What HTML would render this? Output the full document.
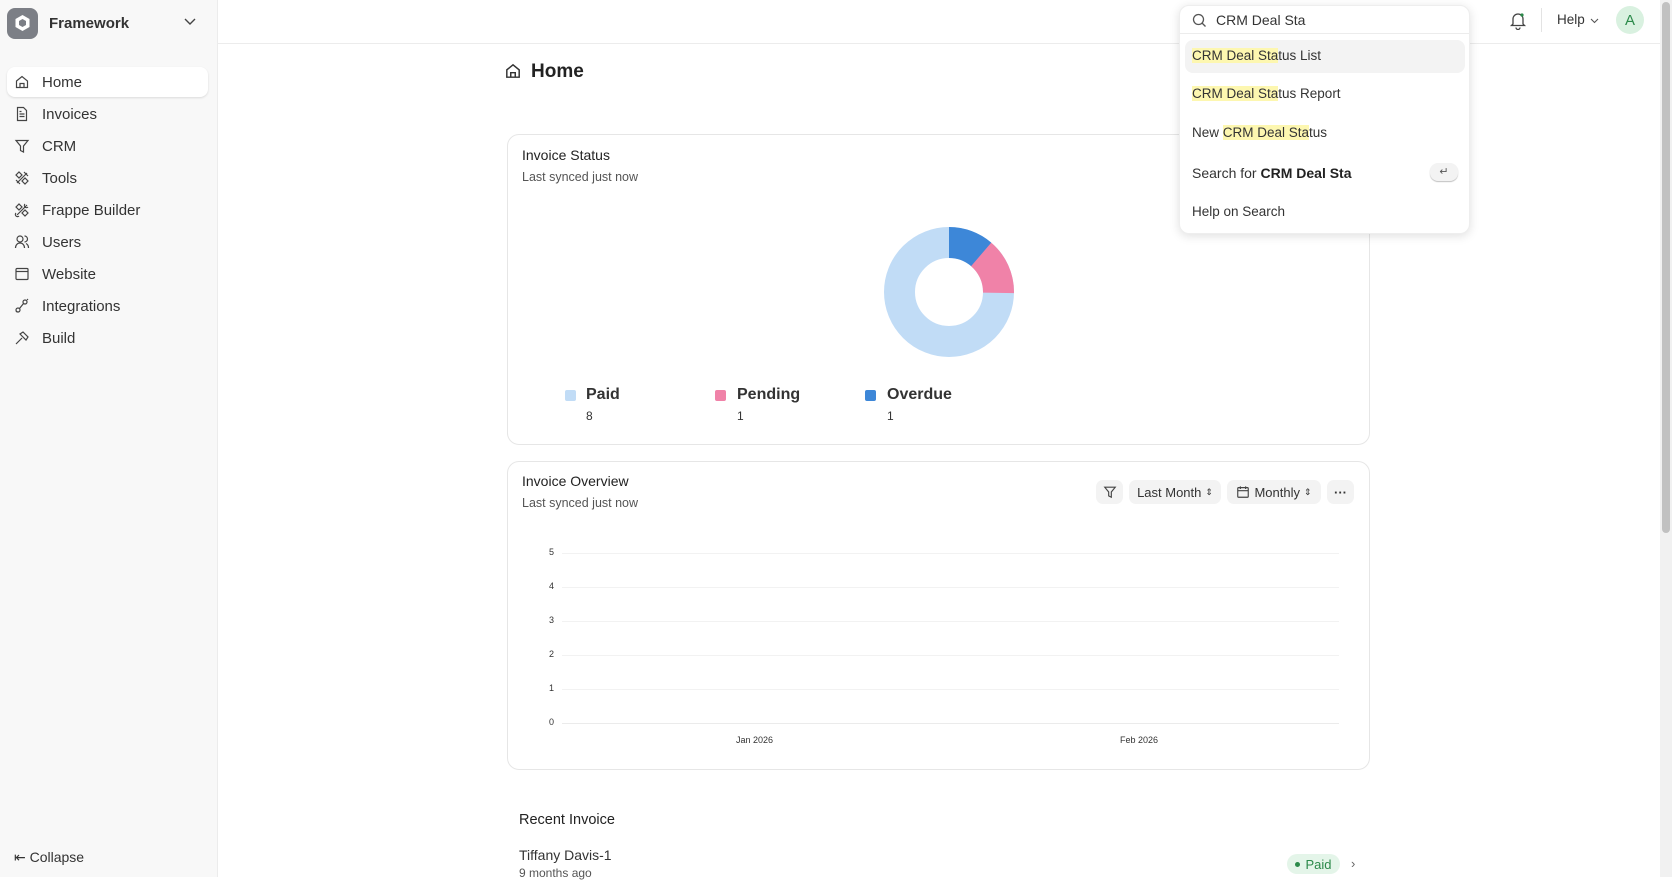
<!DOCTYPE html>
<html><head><meta charset="utf-8"><style>
*{box-sizing:border-box;margin:0;padding:0}
body{width:1672px;height:877px;overflow:hidden;background:#fff;font-family:"Liberation Sans",sans-serif;color:#1f1f1f;position:relative}
.abs{position:absolute}
.side{left:0;top:0;width:218px;height:877px;background:#f8f8f8;border-right:1px solid #ececec}
.nav{position:absolute;left:7px;width:201px;height:30px;font-size:15px;color:#333;display:flex;align-items:center;padding-left:35px}
.nav svg{position:absolute;left:7px;top:7px}
.nav.sel{background:#fff;border-radius:8px;box-shadow:0 1px 2px rgba(0,0,0,.12)}
.card{border:1px solid #e6e6e6;border-radius:12px;background:#fff}
.t{font-size:14px;color:#222}
.s{font-size:12.5px;color:#555}
.btn{background:#f3f3f3;border-radius:7px;height:24px;font-size:13px;color:#333;display:flex;align-items:center;justify-content:center;gap:4px}
.yl{font-size:9px;color:#333;left:549px}
.gl{left:562px;width:777px;height:1px;background:#f2f2f2}
.hl{background:#fdf7b0}
.it{left:1192px;font-size:13.5px;color:#333}
</style></head><body>
<div class="abs side"></div>
<div class="abs" style="left:7px;top:8px;width:31px;height:31px;border-radius:8px;background:#7c7f86">
<svg width="31" height="31" viewBox="0 0 31 31"><path d="M15.5 7l7 4v8l-7 4-7-4v-8z" fill="#fff"/><path d="M15.5 11l3.5 2v4l-3.5 2-3.5-2v-4z" fill="#7c7f86"/></svg></div>
<div class="abs" style="left:49px;top:15px;font-size:15px;font-weight:bold;color:#333">Framework</div>
<svg class="abs" style="left:184px;top:18px" width="12" height="8" viewBox="0 0 12 8"><path d="M1 1l5 5 5-5" fill="none" stroke="#444" stroke-width="1.4"/></svg>

<div class="nav sel" style="top:67px"><svg width="16" height="16" viewBox="0 0 16 16" fill="none" stroke="#444" stroke-width="1.2"><path d="M2.5 7L8 2.5 13.5 7v6.5h-11z M6 13.5V9.5h4v4"/></svg>Home</div>
<div class="nav" style="top:99px"><svg width="16" height="16" viewBox="0 0 16 16" fill="none" stroke="#444" stroke-width="1.2"><path d="M3.5 1.5h6l3 3v10h-9z M5.5 8h5 M5.5 10.5h5 M5.5 5.5h2"/></svg>Invoices</div>
<div class="nav" style="top:131px"><svg width="16" height="16" viewBox="0 0 16 16" fill="none" stroke="#444" stroke-width="1.2"><path d="M2 2.5h12l-4.5 5.5v6l-3-1.5v-4.5z"/></svg>CRM</div>
<div class="nav" style="top:163px"><svg width="16" height="16" viewBox="0 0 16 16" fill="none" stroke="#444" stroke-width="1.2"><path d="M3 13L13 3 M2 5l3-3 3 3-3 3z M8 11l3-3 3 3-3 3z M10 2l4 4 M2 10l4 4"/></svg>Tools</div>
<div class="nav" style="top:195px"><svg width="16" height="16" viewBox="0 0 16 16" fill="none" stroke="#444" stroke-width="1.2"><path d="M3 13L13 3 M2 5l3-3 3 3-3 3z M8 11l3-3 3 3-3 3z M11 2a2 2 0 103 3 M2 11a2 2 0 003 3"/></svg>Frappe Builder</div>
<div class="nav" style="top:227px"><svg width="16" height="16" viewBox="0 0 16 16" fill="none" stroke="#444" stroke-width="1.2"><circle cx="6" cy="5" r="3"/><path d="M1.5 14c0-3 2-5 4.5-5s4.5 2 4.5 5 M10.5 2a3 3 0 010 6 M12 9.5c1.5.7 2.5 2.3 2.5 4.5"/></svg>Users</div>
<div class="nav" style="top:259px"><svg width="16" height="16" viewBox="0 0 16 16" fill="none" stroke="#444" stroke-width="1.2"><rect x="2" y="2.5" width="12" height="11" rx="1"/><path d="M2 5.5h12"/></svg>Website</div>
<div class="nav" style="top:291px"><svg width="16" height="16" viewBox="0 0 16 16" fill="none" stroke="#444" stroke-width="1.2"><circle cx="4" cy="12" r="2"/><circle cx="11" cy="4" r="2"/><path d="M5.5 10.5L9.5 5.5 M2 14l1-1 M13 2l1-1"/></svg>Integrations</div>
<div class="nav" style="top:323px"><svg width="16" height="16" viewBox="0 0 16 16" fill="none" stroke="#444" stroke-width="1.2"><path d="M2 14l6-6 M6 4l3-2 5 5-2 3z"/></svg>Build</div>
<div class="abs" style="left:14px;top:849px;font-size:14px;color:#333">⇤ Collapse</div>

<div class="abs" style="left:218px;top:43px;width:1442px;height:1px;background:#ececec"></div>
<svg class="abs" style="left:504px;top:62px" width="18" height="18" viewBox="0 0 16 16" fill="none" stroke="#333" stroke-width="1.3"><path d="M2.5 7L8 2.5 13.5 7v6.5h-11z M6 13.5V9.5h4v4"/></svg>
<div class="abs" style="left:531px;top:61px;font-size:19px;font-weight:bold;color:#222">Home</div>

<div class="abs card" style="left:507px;top:134px;width:863px;height:311px"></div>
<div class="abs t" style="left:522px;top:147px">Invoice Status</div>
<div class="abs s" style="left:522px;top:170px">Last synced just now</div>
<svg class="abs" style="left:884px;top:227px" width="130" height="130" viewBox="-65 -65 130 130">
<circle r="49.5" fill="none" stroke="#c1dcf6" stroke-width="31"/>
<circle r="49.5" fill="none" stroke="#f082a8" stroke-width="31" stroke-dasharray="44 311" transform="rotate(-50)"/>
<circle r="49.5" fill="none" stroke="#3d87d8" stroke-width="31" stroke-dasharray="35 311" transform="rotate(-90)"/>
</svg>
<div class="abs" style="left:565px;top:390px;width:11px;height:11px;border-radius:2px;background:#c1dcf6"></div>
<div class="abs" style="left:586px;top:386px;font-size:16px;font-weight:bold;color:#333">Paid</div>
<div class="abs" style="left:586px;top:409px;font-size:12px;color:#333">8</div>
<div class="abs" style="left:715px;top:390px;width:11px;height:11px;border-radius:2px;background:#f082a8"></div>
<div class="abs" style="left:737px;top:386px;font-size:16px;font-weight:bold;color:#333">Pending</div>
<div class="abs" style="left:737px;top:409px;font-size:12px;color:#333">1</div>
<div class="abs" style="left:865px;top:390px;width:11px;height:11px;border-radius:2px;background:#3d87d8"></div>
<div class="abs" style="left:887px;top:386px;font-size:16px;font-weight:bold;color:#333">Overdue</div>
<div class="abs" style="left:887px;top:409px;font-size:12px;color:#333">1</div>

<div class="abs card" style="left:507px;top:461px;width:863px;height:309px"></div>
<div class="abs t" style="left:522px;top:473px">Invoice Overview</div>
<div class="abs s" style="left:522px;top:496px">Last synced just now</div>
<div class="abs btn" style="left:1096px;top:480px;width:27px"><svg width="14" height="14" viewBox="0 0 16 16" fill="none" stroke="#444" stroke-width="1.3"><path d="M2 2.5h12l-4.5 5.5v6l-3-1.5v-4.5z"/></svg></div>
<div class="abs btn" style="left:1129px;top:480px;width:92px">Last Month <span style="font-size:9px">⇕</span></div>
<div class="abs btn" style="left:1227px;top:480px;width:94px"><svg width="14" height="14" viewBox="0 0 16 16" fill="none" stroke="#444" stroke-width="1.3"><rect x="2" y="3" width="12" height="11" rx="1"/><path d="M2 6.5h12 M5 1.5v3 M11 1.5v3"/></svg>Monthly <span style="font-size:9px">⇕</span></div>
<div class="abs btn" style="left:1327px;top:480px;width:27px;font-weight:bold">···</div>
<div class="abs yl" style="top:547px">5</div><div class="abs gl" style="top:553px"></div>
<div class="abs yl" style="top:581px">4</div><div class="abs gl" style="top:587px"></div>
<div class="abs yl" style="top:615px">3</div><div class="abs gl" style="top:621px"></div>
<div class="abs yl" style="top:649px">2</div><div class="abs gl" style="top:655px"></div>
<div class="abs yl" style="top:683px">1</div><div class="abs gl" style="top:689px"></div>
<div class="abs yl" style="top:717px">0</div><div class="abs gl" style="top:723px;background:#ebebeb"></div>
<div class="abs" style="left:736px;top:735px;font-size:9px;color:#333">Jan 2026</div>
<div class="abs" style="left:1120px;top:735px;font-size:9px;color:#333">Feb 2026</div>

<div class="abs" style="left:519px;top:812px;font-size:14.5px;color:#222">Recent Invoice</div>
<div class="abs" style="left:519px;top:847px;font-size:14px;color:#333">Tiffany Davis-1</div>
<div class="abs" style="left:519px;top:866px;font-size:12px;color:#555">9 months ago</div>
<div class="abs" style="left:1287px;top:854px;width:53px;height:20px;border-radius:10px;background:#e4f5e9;color:#2b8a4a;font-size:13px;display:flex;align-items:center;justify-content:center;gap:5px"><span style="width:5px;height:5px;border-radius:50%;background:#2b8a4a"></span>Paid</div>
<div class="abs" style="left:1351px;top:856px;font-size:13px;color:#666">›</div>

<svg class="abs" style="left:1509px;top:10px" width="18" height="20" viewBox="0 0 18 20" fill="none" stroke="#444" stroke-width="1.3"><path d="M4 14V9a5 5 0 0110 0v5l1.5 1.5h-13z M7 17.5a2 2 0 004 0"/><circle cx="13" cy="5" r="1.6" fill="#2b8a4a" stroke="none"/></svg>
<div class="abs" style="left:1541px;top:8px;width:1px;height:24px;background:#e3e3e3"></div>
<div class="abs" style="left:1557px;top:12px;font-size:13.5px;color:#333">Help</div>
<svg class="abs" style="left:1590px;top:18px" width="9" height="6" viewBox="0 0 9 6"><path d="M1 1l3.5 3.5L8 1" fill="none" stroke="#555" stroke-width="1.1"/></svg>
<div class="abs" style="left:1616px;top:6px;width:28px;height:28px;border-radius:50%;background:#d9f1e0;color:#2b8a4a;font-size:15px;display:flex;align-items:center;justify-content:center">A</div>

<div class="abs" style="left:1660px;top:0;width:12px;height:877px;background:#f1f1f1"></div>
<div class="abs" style="left:1662px;top:2px;width:8px;height:531px;background:#c1c1c1;border-radius:4px"></div>

<div class="abs" style="left:1179px;top:5px;width:291px;height:229px;background:#fff;border-radius:10px;box-shadow:0 2px 10px rgba(0,0,0,.13);border:1px solid #eee"></div>
<div class="abs" style="left:1180px;top:33px;width:289px;height:1px;background:#ececec"></div>
<svg class="abs" style="left:1192px;top:13px" width="15" height="15" viewBox="0 0 15 15" fill="none" stroke="#555" stroke-width="1.3"><circle cx="6.5" cy="6.5" r="5"/><path d="M10 10l3.5 3.5"/></svg>
<div class="abs" style="left:1216px;top:12px;font-size:14px;color:#333">CRM Deal Sta</div>
<div class="abs" style="left:1185px;top:40px;width:280px;height:33px;border-radius:8px;background:#f3f3f3"></div>
<div class="abs it" style="top:48px"><span class="hl">CRM Deal Sta</span>tus List</div>
<div class="abs it" style="top:86px"><span class="hl">CRM Deal Sta</span>tus Report</div>
<div class="abs it" style="top:125px">New <span class="hl">CRM Deal Sta</span>tus</div>
<div class="abs it" style="top:165px;font-size:14px">Search for <b style="color:#222">CRM Deal Sta</b></div>
<div class="abs" style="left:1430px;top:163px;width:28px;height:18px;border-radius:8px;background:#f3f3f3;box-shadow:0 1px 1px rgba(0,0,0,.25);font-size:11px;color:#555;text-align:center;line-height:18px">↵</div>
<div class="abs it" style="top:204px">Help on Search</div>
</body></html>
